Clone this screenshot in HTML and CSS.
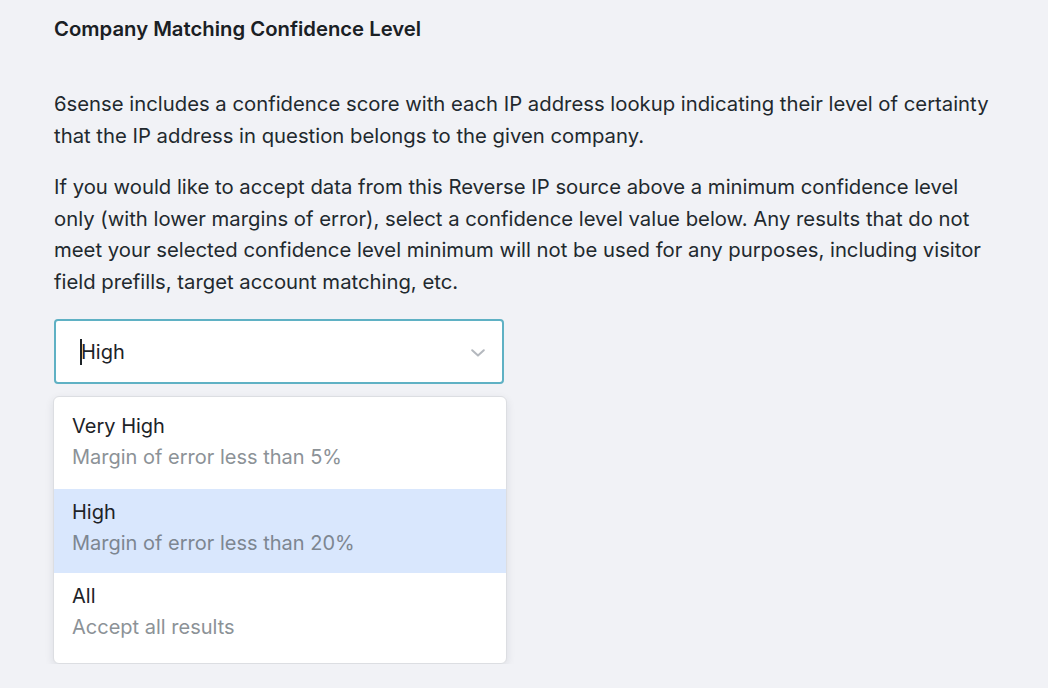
FILE: index.html
```html
<!DOCTYPE html>
<html>
<head>
<meta charset="utf-8">
<link rel="stylesheet" href="styles.css">
</head>
<body>
<div class="page">
  <h2 class="title">Company Matching Confidence Level</h2>
  <p class="para">6sense includes a confidence score with each IP address lookup indicating their level of certainty that the IP address in question belongs to the given company.</p>
  <p class="para">If you would like to accept data from this Reverse IP source above a minimum confidence level only (with lower margins of error), select a confidence level value below. Any results that do not meet your selected confidence level minimum will not be used for any purposes, including visitor field prefills, target account matching, etc.</p>
  <div class="select-wrap">
    <div class="select">
      <span class="caret"></span><span class="value">High</span>
      <svg class="chev" width="14" height="8" viewBox="0 0 14 8"><path d="M1.2 1.2 L7 6.6 L12.8 1.2" fill="none" stroke="#b4b8be" stroke-width="2" stroke-linecap="round" stroke-linejoin="round"/></svg>
    </div>
    <div class="menu">
      <div class="option first">
        <div class="opt-title">Very High</div>
        <div class="opt-desc">Margin of error less than 5%</div>
      </div>
      <div class="option selected">
        <div class="opt-title">High</div>
        <div class="opt-desc">Margin of error less than 20%</div>
      </div>
      <div class="option last">
        <div class="opt-title">All</div>
        <div class="opt-desc">Accept all results</div>
      </div>
    </div>
  </div>
</div>
</body>
</html>
```
FILE: styles.css
```css
html, body {
  margin: 0;
  padding: 0;
  background: #f1f2f6;
}
body {
  font-family: Inter, "Noto Sans", sans-serif;
  color: #1d2328;
}
.page {
  padding: 16px 0 0 54px;
  width: 948px;
}
.title {
  margin: 0;
  font-size: 20.3px;
  font-weight: 600;
  line-height: 26px;
  color: #1a2024;
}
.para {
  margin: 0;
  font-size: 20.3px;
  line-height: 31.5px;
  color: #22292e;
}
.title + .para {
  margin-top: 46px;
}
.para + .para {
  margin-top: 20px;
}
.select-wrap {
  margin-top: 22px;
  width: 450px;
}
.select {
  box-sizing: border-box;
  height: 65px;
  border: 2px solid #5fb1c4;
  border-radius: 4px;
  background: #fff;
  display: flex;
  align-items: center;
  padding: 0 17px 0 24px;
  font-size: 20px;
  color: #1d2328;
}
.caret {
  width: 2px;
  height: 26px;
  background: #1d2328;
  margin-right: -1px;
}
.value {
  flex: 1;
}
.chev {
  display: block;
  margin-top: 3px;
}
.menu {
  margin-top: 12px;
  margin-left: -1px;
  width: 452px;
  background: #fff;
  border: 1px solid #dcdee2;
  border-radius: 6px;
  box-shadow: 0 3px 8px rgba(30, 40, 60, 0.10);
  overflow: hidden;
}
.option {
  padding: 10px 18px 0 18px;
  height: 84px;
  box-sizing: border-box;
}
.option.first {
  padding-top: 16px;
  height: 92px;
}
.option.last {
  height: 90px;
}
.option.selected {
  background: #d9e7fd;
}
.opt-title {
  font-size: 20px;
  line-height: 26px;
  color: #1d2328;
}
.opt-desc {
  font-size: 20px;
  line-height: 31px;
  color: #8c9297;
  margin-top: 2.5px;
}
.option.selected .opt-desc {
  color: #7d8691;
}
```
